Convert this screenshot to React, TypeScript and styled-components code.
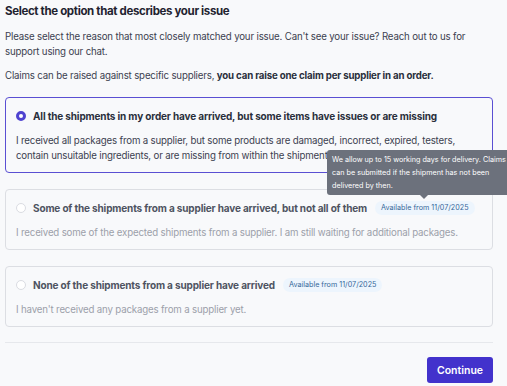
import React, { useState } from "react";
import styled, { createGlobalStyle } from "styled-components";

const GlobalStyle = createGlobalStyle`
  html, body {
    margin: 0;
    background: #f8f9fb;
    font-family: Inter, "Noto Sans", Arial, sans-serif;
    color: #1f2330;
    overflow: hidden;
  }
`;

type Option = {
  id: string;
  title: string;
  description: string;
  availableFrom?: string;
};

const options: Option[] = [
  {
    id: "issues",
    title: "All the shipments in my order have arrived, but some items have issues or are missing",
    description:
      "I received all packages from a supplier, but some products are damaged, incorrect, expired, testers, contain unsuitable ingredients, or are missing from within the shipment.",
  },
  {
    id: "partial",
    title: "Some of the shipments from a supplier have arrived, but not all of them",
    description:
      "I received some of the expected shipments from a supplier. I am still waiting for additional packages.",
    availableFrom: "11/07/2025",
  },
  {
    id: "none",
    title: "None of the shipments from a supplier have arrived",
    description: "I haven't received any packages from a supplier yet.",
    availableFrom: "11/07/2025",
  },
];

const App: React.FC = () => {
  const [selected] = useState("issues");

  return (
    <Page>
      <GlobalStyle />
      <Heading>Select the option that describes your issue</Heading>
      <Intro>
        Please select the reason that most closely matched your issue. Can't see your issue? Reach out to us for
        support using our chat.
      </Intro>
      <Intro>
        Claims can be raised against specific suppliers, <strong>you can raise one claim per supplier in an order.</strong>
      </Intro>

      <OptionList>
        {options.map((opt, i) => {
          const active = opt.id === selected;
          const disabled = !!opt.availableFrom;
          return (
            <Card key={opt.id} active={active}>
              <TitleRow>
                <Radio active={active} />
                <Title disabled={disabled}>{opt.title}</Title>
                {opt.availableFrom && (
                  <BadgeWrap>
                    <Badge>Available from {opt.availableFrom}</Badge>
                    {i === 1 && (
                      <Tooltip>
                        We allow up to 15 working days for delivery. Claims can be submitted if the shipment has not
                        been delivered by then.
                      </Tooltip>
                    )}
                  </BadgeWrap>
                )}
              </TitleRow>
              <Description disabled={disabled}>{opt.description}</Description>
            </Card>
          );
        })}
      </OptionList>

      <Footer>
        <ContinueButton>Continue</ContinueButton>
      </Footer>
    </Page>
  );
};

export default App;

const Page = styled.div`
  width: 488px;
  padding: 3px 0 0 5px;
`;

const Heading = styled.h1`
  font-size: 11.5px;
  letter-spacing: -0.35px;
  font-weight: 700;
  color: #1f2330;
  margin: 0 0 10px;
  line-height: 16px;
`;

const Intro = styled.p`
  font-size: 9.7px;
  letter-spacing: -0.17px;
  line-height: 15px;
  color: #3c4150;
  margin: 0 0 9px;

  strong {
    font-weight: 700;
    color: #2a2f3b;
  }
`;

const OptionList = styled.div`
  display: flex;
  flex-direction: column;
  gap: 16px;
  margin-top: 14px;
`;

const Card = styled.div<{ active: boolean }>`
  border: ${(p) => (p.active ? "1.5px solid #5a4fd3" : "1.5px solid #dcdee3")};
  border-radius: 4px;
  padding: 10px 10px 9px 10px;
`;

const TitleRow = styled.div`
  display: flex;
  align-items: center;
  height: 16px;
`;

const Radio = styled.span<{ active: boolean }>`
  box-sizing: border-box;
  width: 10px;
  height: 10px;
  border-radius: 50%;
  margin: 0 7px 0 0;
  flex-shrink: 0;
  border: ${(p) => (p.active ? "3px solid #4f43d0" : "1px solid #dadce2")};
  background: #fff;
`;

const Title = styled.span<{ disabled: boolean }>`
  font-size: 10px;
  letter-spacing: -0.15px;
  font-weight: 700;
  color: ${(p) => (p.disabled ? "#4e5361" : "#2a2f3b")};
  white-space: nowrap;
`;

const BadgeWrap = styled.span`
  position: relative;
  margin-left: 8px;
  display: inline-flex;
`;

const Badge = styled.span`
  background: #edf5fd;
  color: #36679a;
  font-size: 7.2px;
  line-height: 8px;
  padding: 3px 6px;
  border-radius: 8px;
  white-space: nowrap;
`;

const Tooltip = styled.div`
  position: absolute;
  bottom: calc(100% + 6px);
  left: -48px;
  width: 185px;
  background: #6c717c;
  color: #fff;
  font-size: 7.2px;
  line-height: 13px;
  padding: 3px 5px;
  border-radius: 3px;

  &::after {
    content: "";
    position: absolute;
    top: 100%;
    left: 93px;
    border: 4px solid transparent;
    border-top-color: #6c717c;
  }
`;

const Description = styled.p<{ disabled: boolean }>`
  font-size: 9.7px;
  letter-spacing: -0.17px;
  line-height: 15px;
  color: ${(p) => (p.disabled ? "#9ca0aa" : "#3c4150")};
  margin: 9px 0 0;
`;

const Footer = styled.div`
  border-top: 1px solid #e6e8ec;
  margin-top: 15px;
  padding-top: 14px;
  display: flex;
  justify-content: flex-end;
`;

const ContinueButton = styled.button`
  background: #4232cc;
  color: #fff;
  border: none;
  border-radius: 3px;
  font-family: inherit;
  font-size: 10.5px;
  font-weight: 600;
  width: 66px;
  height: 26px;
  padding: 0;
  cursor: pointer;
`;
